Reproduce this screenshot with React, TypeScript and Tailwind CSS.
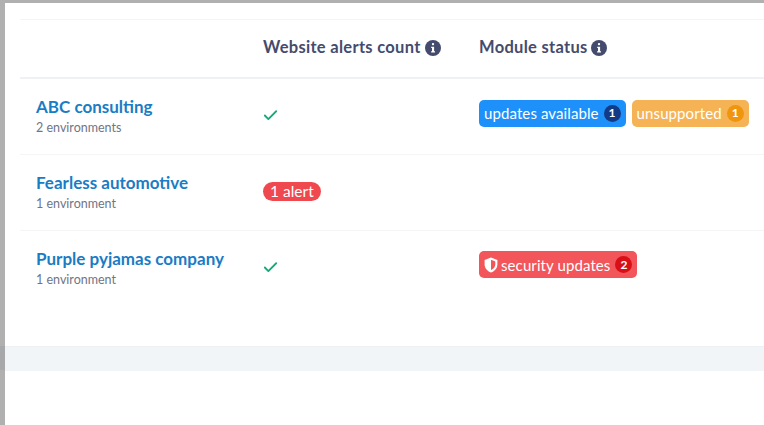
import { Check } from "lucide-react";

const font = "font-['Lato',sans-serif]";

function InfoDot() {
  return (
    <svg width="16" height="16" viewBox="0 0 16 16" className="shrink-0">
      <circle cx="8" cy="8" r="8" fill="#454b6d" />
      <rect x="6.9" y="3" width="2.2" height="2.2" rx="1" fill="#fff" />
      <path d="M6.2 6.7h2.9v4.6h.9v1.2H6.1v-1.2h.9V7.9h-.8z" fill="#fff" />
    </svg>
  );
}

function Badge({
  label,
  count,
  bg,
  countBg,
  shield,
}: {
  label: string;
  count: number;
  bg: string;
  countBg: string;
  shield?: boolean;
}) {
  return (
    <span className={`inline-flex items-center h-[27px] rounded-[5px] pl-[5px] pr-[5px] text-[15px] tracking-[0.1px] text-white ${bg}`}>
      {shield && (
        <svg width="14" height="16" viewBox="0 0 14 16" className="mr-[3px]">
          <path d="M7 0.5 13.4 3v4.2c0 3.8-2.6 6.8-6.4 8.3C3.2 14 .6 11 .6 7.2V3z" fill="#fff" />
          <path d="M7 2.8 11.3 4.5v2.8c0 2.6-1.7 4.6-4.3 5.8z" fill="#f2555a" />
        </svg>
      )}
      <span>{label}</span>
      <span className={`ml-[5px] flex items-center justify-center w-[17px] h-[17px] rounded-full text-[12px] font-bold ${countBg}`}>
        {count}
      </span>
    </span>
  );
}

function Company({ name, envs }: { name: string; envs: string }) {
  return (
    <div className="pl-[16px] pt-[2px]">
      <div className="text-[17px] leading-[20px] font-bold text-[#1a7cc4] whitespace-nowrap">{name}</div>
      <div className="mt-[2px] text-[12.5px] leading-[18px] text-[#6f7587]">{envs}</div>
    </div>
  );
}

const tick = <Check size={17} strokeWidth={2.6} className="-ml-[1px] text-[#1aa877]" />;

const rows = [
  {
    name: "ABC consulting",
    envs: "2 environments",
    alerts: tick,
    status: (
      <div className="flex gap-[6px]">
        <Badge label="updates available" count={1} bg="bg-[#1e90fa]" countBg="bg-[#123a86]" />
        <Badge label="unsupported" count={1} bg="bg-[#f6b355]" countBg="bg-[#f0950c]" />
      </div>
    ),
    height: "h-[76px]",
  },
  {
    name: "Fearless automotive",
    envs: "1 environment",
    alerts: (
      <span className="inline-flex items-center h-[19px] rounded-full bg-[#f0484f] px-[7px] text-[15.5px] text-white">
        1 alert
      </span>
    ),
    status: null,
    height: "h-[76px]",
  },
  {
    name: "Purple pyjamas company",
    envs: "1 environment",
    alerts: tick,
    status: <Badge label="security updates" count={2} bg="bg-[#f2555a]" countBg="bg-[#d90f17]" shield />,
    height: "h-[75px]",
  },
];

export default function App() {
  return (
    <div className={`flex flex-col w-[764px] h-[425px] overflow-hidden bg-white ${font}`}>
      <div className="h-[3px] bg-[#b0b0b0]" />
      <div className="flex flex-1">
        <div className="flex flex-col w-[5px]">
          <div className="h-[343px] bg-[#b0b0b0]" />
          <div className="h-[24px] bg-[#a6a8aa]" />
          <div className="flex-1 bg-[#b0b0b0]" />
        </div>
        <div className="flex flex-col flex-1">
          <div className="pl-[15px] pt-[16px]">
            <div className="grid grid-cols-[243px_216px_1fr] h-[60px] pb-[2px] items-center border-y border-[#f3f5f7] border-b-2 border-b-[#eff1f5] text-[16.5px] tracking-[0.3px] font-bold text-[#454b6d]">
              <div />
              <div className="flex items-center gap-[4px] whitespace-nowrap">
                Website alerts count <InfoDot />
              </div>
              <div className="flex items-center gap-[3px] whitespace-nowrap">
                Module status <InfoDot />
              </div>
            </div>
            {rows.map((row) => (
              <div
                key={row.name}
                className={`grid grid-cols-[243px_216px_1fr] items-center pb-[2px] border-b border-[#f4f5f7] last:border-b-0 ${row.height}`}
              >
                <Company name={row.name} envs={row.envs} />
                <div className="flex items-center">{row.alerts}</div>
                <div className="pb-[5px]">{row.status}</div>
              </div>
            ))}
          </div>
          <div className="mt-[40px] h-[25px] bg-[#f2f5f8] border-t border-[#eef1f4]" />
        </div>
      </div>
    </div>
  );
}
